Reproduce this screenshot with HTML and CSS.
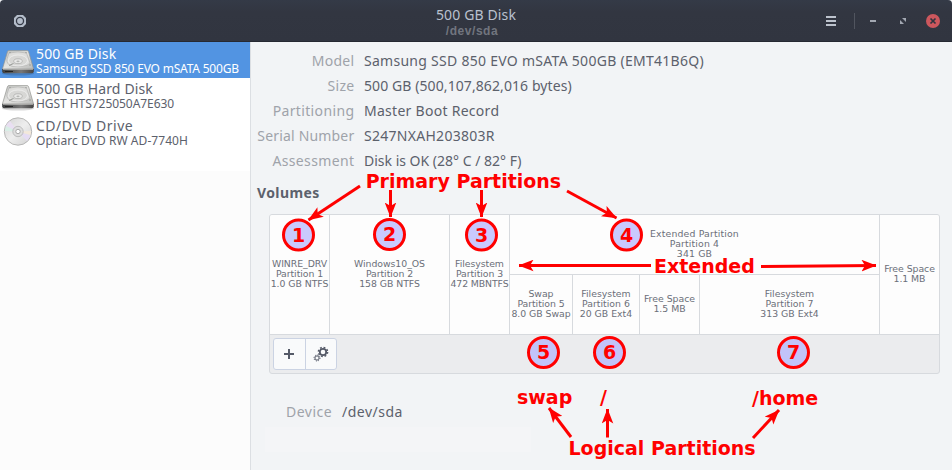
FILE: index.html
```html
<!DOCTYPE html>
<html lang="en">
<head>
<meta charset="utf-8">
<title>Disks</title>
<link rel="stylesheet" href="styles.css">
</head>
<body>
<svg class="defs" width="0" height="0">
  <defs>
    <linearGradient id="metal" x1="0" y1="0" x2="1" y2="1"><stop offset="0" stop-color="#bfc0be"/><stop offset=".5" stop-color="#e4e4e2"/><stop offset="1" stop-color="#b8b9b7"/></linearGradient>
    <linearGradient id="front" x1="0" y1="0" x2="1" y2="0"><stop offset="0" stop-color="#3e4041"/><stop offset=".6" stop-color="#777"/><stop offset="1" stop-color="#444"/></linearGradient>
    <linearGradient id="disc" x1="0" y1="0" x2="1" y2="1"><stop offset="0" stop-color="#d2d2d2"/><stop offset=".5" stop-color="#eeeeee"/><stop offset="1" stop-color="#d0d0d0"/></linearGradient>
    <symbol id="drive" viewBox="0 0 34 26">
      <ellipse cx="17" cy="23.500" rx="16" ry="2" fill="#000" opacity=".15"/>
      <path d="M6.500 1.500Q6.800.6 8 .6H26Q27.200.6 27.500 1.500L32.600 19H1.400Z" fill="url(#metal)" stroke="#92948f" stroke-width=".7"/>
      <path d="M1.200 19H32.800V21.300Q32.800 23.300 31 23.300H3Q1.200 23.300 1.200 21.300Z" fill="url(#front)"/>
      <path d="M2 19.300H32" stroke="#c9c9c7" stroke-width=".8"/>
      <path d="M4 21.500H12" stroke="#222" stroke-width="1"/>
      <path d="M8 3Q17 .8 25.500 3L29 13Q27 16 21 16.400H11Q5 14 6 9Z" fill="#dededc" stroke="#b4b5b3" stroke-width=".7"/>
      <ellipse cx="17" cy="10.500" rx="9.500" ry="5.500" fill="#d7d7d5" stroke="#f4f4f4" stroke-width=".7"/>
      <ellipse cx="17" cy="11.200" rx="4.300" ry="2.400" fill="#e9e9e8" stroke="#a7a8a6" stroke-width=".7"/>
      <ellipse cx="17" cy="11.400" rx="1.600" ry=".8" fill="#b5b6b4"/>
      <path d="M8 15.500L12.500 13.500" stroke="#969894" stroke-width="1"/>
      <circle cx="9" cy="2.600" r=".7" fill="#8e908c"/><circle cx="25" cy="2.600" r=".7" fill="#8e908c"/><circle cx="29" cy="15" r=".7" fill="#8e908c"/>
    </symbol>
    <marker id="head" viewBox="0 0 15 12" refX="14.500" refY="6" markerWidth="15" markerHeight="12" markerUnits="userSpaceOnUse" orient="auto"><path d="M15 6L0 .2L3.500 6L0 11.800Z" fill="red"/></marker>
  </defs>
</svg>

<header class="titlebar">
  <svg class="app-icon" width="14" height="14" viewBox="0 0 14 14"><path d="M4 1H10L13 4V10L10 13H4L1 10V4Z" fill="#b4bdca"/><circle cx="7" cy="7" r="4.200" fill="#353a47"/><circle cx="7" cy="7" r="2.900" fill="#b4bdca"/></svg>
  <div class="heading"><div class="title">500 GB Disk</div><div class="subtitle">/dev/sda</div></div>
  <div class="controls">
    <svg width="10" height="10" viewBox="0 0 10 10"><path d="M0 1H10M0 5H10M0 9H10" stroke="#bdc3cd" stroke-width="2"/></svg>
    <span class="divider"></span>
    <svg class="min" width="6" height="10" viewBox="0 0 6 10"><path d="M0 5H6" stroke="#a3a8b2" stroke-width="2"/></svg>
    <svg class="max" width="6" height="6" viewBox="0 0 6 6"><path d="M2 0H6V4ZM0 2V6H4Z" fill="#a3a8b2"/></svg>
    <svg class="close" width="14" height="14" viewBox="0 0 14 14"><circle cx="7" cy="7" r="7" fill="#cc575d"/><path d="M4.500 4.500L9.500 9.500M9.500 4.500L4.500 9.500" stroke="#2f343f" stroke-width="1.700"/></svg>
  </div>
</header>

<div class="window">
  <aside class="sidebar">
    <div class="drive selected">
      <svg width="34" height="26"><use href="#drive"/></svg>
      <div><div class="name">500 GB Disk</div><div class="model ssd">Samsung SSD 850 EVO mSATA 500GB</div></div>
    </div>
    <div class="drive hard">
      <svg width="34" height="26"><use href="#drive"/></svg>
      <div><div class="name">500 GB Hard Disk</div><div class="model hgst">HGST HTS725050A7E630</div></div>
    </div>
    <div class="drive optical">
      <svg width="34" height="30" viewBox="0 0 34 30">
        <circle cx="17" cy="14.500" r="13.700" fill="url(#disc)" stroke="#a9aaa8" stroke-width=".8"/>
        <path d="M17 14.500L4.500 10A13 13 0 0 1 9 4Z" fill="#e9dff2"/><path d="M17 14.500L4 14A13 13 0 0 1 5 9Z" fill="#d9eee6"/>
        <path d="M17 14.500L29.500 18A13 13 0 0 1 26 24Z" fill="#e5dcf3"/><path d="M17 14.500L30 14A13 13 0 0 1 29.500 18Z" fill="#f3e8da"/>
        <circle cx="17" cy="14.500" r="5.200" fill="#dedede" stroke="#b4b4b4" stroke-width=".8"/><circle cx="17" cy="14.500" r="2.200" fill="#fff" stroke="#9a9a9a" stroke-width=".8"/>
      </svg>
      <div><div class="name cd">CD/DVD Drive</div><div class="model">Optiarc DVD RW AD-7740H</div></div>
    </div>
  </aside>

  <main class="content">
    <dl class="details">
      <dt>Model</dt><dd class="v-model">Samsung SSD 850 EVO mSATA 500GB (EMT41B6Q)</dd>
      <dt>Size</dt><dd class="v-size">500 GB (500,107,862,016 bytes)</dd>
      <dt class="wide">Partitioning</dt><dd class="v-model">Master Boot Record</dd>
      <dt class="serial">Serial Number</dt><dd class="v-model">S247NXAH203803R</dd>
      <dt class="wide">Assessment</dt><dd class="v-health">Disk is OK (28° C / 82° F)</dd>
    </dl>
    <h2>Volumes</h2>
    <section class="volumes">
      <div class="map">
        <div class="cell">WINRE_DRV<br>Partition 1<br>1.0 GB NTFS</div>
        <div class="cell">Windows10_OS<br>Partition 2<br>158 GB NTFS</div>
        <div class="cell tight">Filesystem<br>Partition 3<br><span>472 MBNTFS</span></div>
        <div class="extended">
          <div class="cell">Extended Partition<br>Partition 4<br>341 GB</div>
          <div class="logical">
            <div class="cell">Swap<br>Partition 5<br>8.0 GB Swap</div>
            <div class="cell">Filesystem<br>Partition 6<br>20 GB Ext4</div>
            <div class="cell">Free Space<br>1.5 MB</div>
            <div class="cell">Filesystem<br>Partition 7<br>313 GB Ext4</div>
          </div>
        </div>
        <div class="cell">Free Space<br>1.1 MB</div>
      </div>
      <div class="toolbar">
        <div class="buttons">
          <button aria-label="Add"><svg width="10" height="10" viewBox="0 0 10 10"><path d="M0 5H10M5 0V10" stroke="#555a68" stroke-width="2"/></svg></button>
          <button aria-label="Options"><svg width="16" height="16" viewBox="0 0 16 16" fill="none" stroke="#555a68"><circle cx="10" cy="6" r="3.200" stroke-width="1.800"/><circle cx="10" cy="6" r="4.600" stroke-width="1.500" stroke-dasharray="1.800 1.813"/><circle cx="4" cy="12" r="2.100" stroke-width="1"/><circle cx="4" cy="12" r="3" stroke-width="1" stroke-dasharray="1.100 1.256"/></svg></button>
        </div>
      </div>
    </section>
    <div class="device"><span class="label">Device</span><span class="path">/dev/sda</span></div>
    <div class="patch"></div>
  </main>
</div>

<svg class="notes" width="952" height="470" viewBox="0 0 952 470">
  <g class="arrows">
    <path d="M360 186L308.500 220"/><path d="M390.500 190V217"/><path d="M481.500 190V217"/><path d="M567 191L616.500 218"/>
    <path d="M651 265.500H519"/><path d="M761 266.500L876 265.500"/>
    <path d="M571 437L549 408"/><path d="M607.500 437.500V409"/><path d="M753 438L779 410"/>
  </g>
  <g class="circles">
    <circle cx="298.500" cy="235" r="15"/><circle cx="389.500" cy="234.500" r="15"/><circle cx="481.500" cy="235" r="15"/><circle cx="626.500" cy="235" r="15"/>
    <circle cx="543.500" cy="352.500" r="15"/><circle cx="609.500" cy="352.500" r="15"/><circle cx="793.500" cy="352.500" r="15"/>
  </g>
  <g class="digits">
    <text x="298.500" y="242">1</text><text x="389.500" y="241">2</text><text x="481.500" y="242">3</text><text x="626.500" y="242">4</text>
    <text x="543.500" y="359">5</text><text x="609.500" y="359">6</text><text x="793.500" y="359">7</text>
  </g>
  <g class="words">
    <text x="365.700" y="187.500">Primary Partitions</text><text x="654" y="273">Extended</text>
    <text x="517" y="404">swap</text><text x="600" y="404">/</text><text x="752" y="405">/home</text>
    <text x="568.500" y="455">Logical Partitions</text>
  </g>
</svg>
</body>
</html>
```

FILE: styles.css
```css
* { box-sizing: border-box; }
body { margin: 0; width: 952px; height: 470px; overflow: hidden; position: relative; background: #f2f4f6; color: #5c616c; font: 14px/20px "Noto Sans", sans-serif; }
.defs { position: absolute; }

.titlebar { height: 42px; display: grid; grid-template-columns: 150px 1fr 150px; background: linear-gradient(#343a47, #323641 30%, #313540); border-bottom: 1px solid #262932; border-radius: 4px 4px 0 0; }
.app-icon { margin: 14px 0 0 13px; }
.heading { text-align: center; }
.title { color: #b9c1cf; line-height: 20px; padding-top: 5px; letter-spacing: .13px; }
.subtitle { color: #71757f; font: bold 12px/13px "Liberation Sans", sans-serif; padding-right: 8px; letter-spacing: .55px; }
.controls { display: flex; align-items: center; padding-left: 24px; }
.divider { width: 1px; height: 16px; background: #51555f; margin-left: 18px; }
.min { margin-left: 15px; }
.max { margin-left: 24px; }
.close { margin-left: 20px; }

.window { display: flex; height: 428px; }
.sidebar { width: 251px; background: linear-gradient(#fff 129px, #fcfcfc 129px); border-right: 1px solid #dcdfe3; }
.drive { display: flex; height: 36px; padding: 8px 0 0 1px; }
.drive > div { margin: -5px 0 0 1px; white-space: nowrap; }
.drive svg { flex: none; }
.selected { background: #5294e2; color: #fff; }
.hard { height: 35px; padding-top: 7px; }
.optical { padding-top: 5px; }
.optical > svg { margin-top: -1px; }
.optical > div { margin-top: -1px; }
.name { line-height: 18px; letter-spacing: .15px; }
.name.cd { letter-spacing: .5px; }
.model { font-size: 12px; line-height: 12px; letter-spacing: .06px; }
.model.ssd { letter-spacing: -.2px; }
.model.hgst { letter-spacing: -.05px; }

.content { flex: 1; }
.details { display: grid; grid-template-columns: 103.4px 1fr; column-gap: 9.6px; grid-auto-rows: 25px; margin: 6px 0 0; }
dt { color: #9fa3aa; text-align: right; line-height: 25px; letter-spacing: .25px; }
dt.wide { letter-spacing: .36px; }
dt.serial { letter-spacing: .18px; }
dd { margin: 0; line-height: 25px; }
.v-model { letter-spacing: .28px; }
.v-size { letter-spacing: .09px; }
.v-health { letter-spacing: 0; }
h2 { margin: 10px 0 0 6px; font-size: 14px; line-height: 20px; letter-spacing: .4px; }

.volumes { margin: 11px 0 0 18px; width: 671px; height: 160px; border: 1px solid #d7dade; border-radius: 3px; background: #ebecee; overflow: hidden; }
.map { display: grid; grid-template-columns: 60px 120px 60px 370px 59px; height: 120px; background: #fdfdfd; border-bottom: 1px solid #d7dade; font: 9.33px/10px "DejaVu Sans", sans-serif; color: #6b6f79; }
.cell { text-align: center; white-space: nowrap; border-right: 1px solid #d7dade; }
.map > .cell { padding-top: 44px; letter-spacing: -.05px; }
.map > .cell:last-child { padding-top: 49px; border-right: 0; }
.map > .tight span { letter-spacing: -.1px; }
.extended { display: grid; grid-template-rows: 60px 59px; }
.extended > .cell { border-bottom: 1px solid #d7dade; padding-top: 14px; letter-spacing: .15px; }
.logical { display: grid; grid-template-columns: 63px 67px 60px 180px; }
.logical .cell { padding-top: 14px; }
.logical .cell:first-child { letter-spacing: -.05px; }
.logical .cell:nth-child(3) { padding-top: 19px; }

.toolbar { padding: 3px; }
.buttons { display: inline-flex; width: 64px; height: 32px; border: 1px solid #cbd3e3; border-radius: 3px; background: #f9fafb; }
button { flex: 1; padding: 0; border: 0; background: none; display: grid; place-items: center; }
button + button { border-left: 1px solid #cbd3e3; }

.device { display: flex; gap: 9px; margin: 28px 0 0 35px; }
.device .label { color: #9fa3aa; width: 47px; letter-spacing: .5px; }
.device .path { letter-spacing: .5px; }
.patch { width: 266px; height: 25px; margin: 5px 0 0 14px; background: #f4f5f7; }

.notes { position: absolute; left: 0; top: 0; pointer-events: none; }
.arrows path { fill: none; stroke: red; stroke-width: 3; marker-end: url(#head); }
.circles circle { fill: #aaf; fill-opacity: .62; stroke: red; stroke-width: 3; }
.digits text, .words text { font: bold 19px "DejaVu Sans", sans-serif; fill: red; }
.digits text { text-anchor: middle; }
```
